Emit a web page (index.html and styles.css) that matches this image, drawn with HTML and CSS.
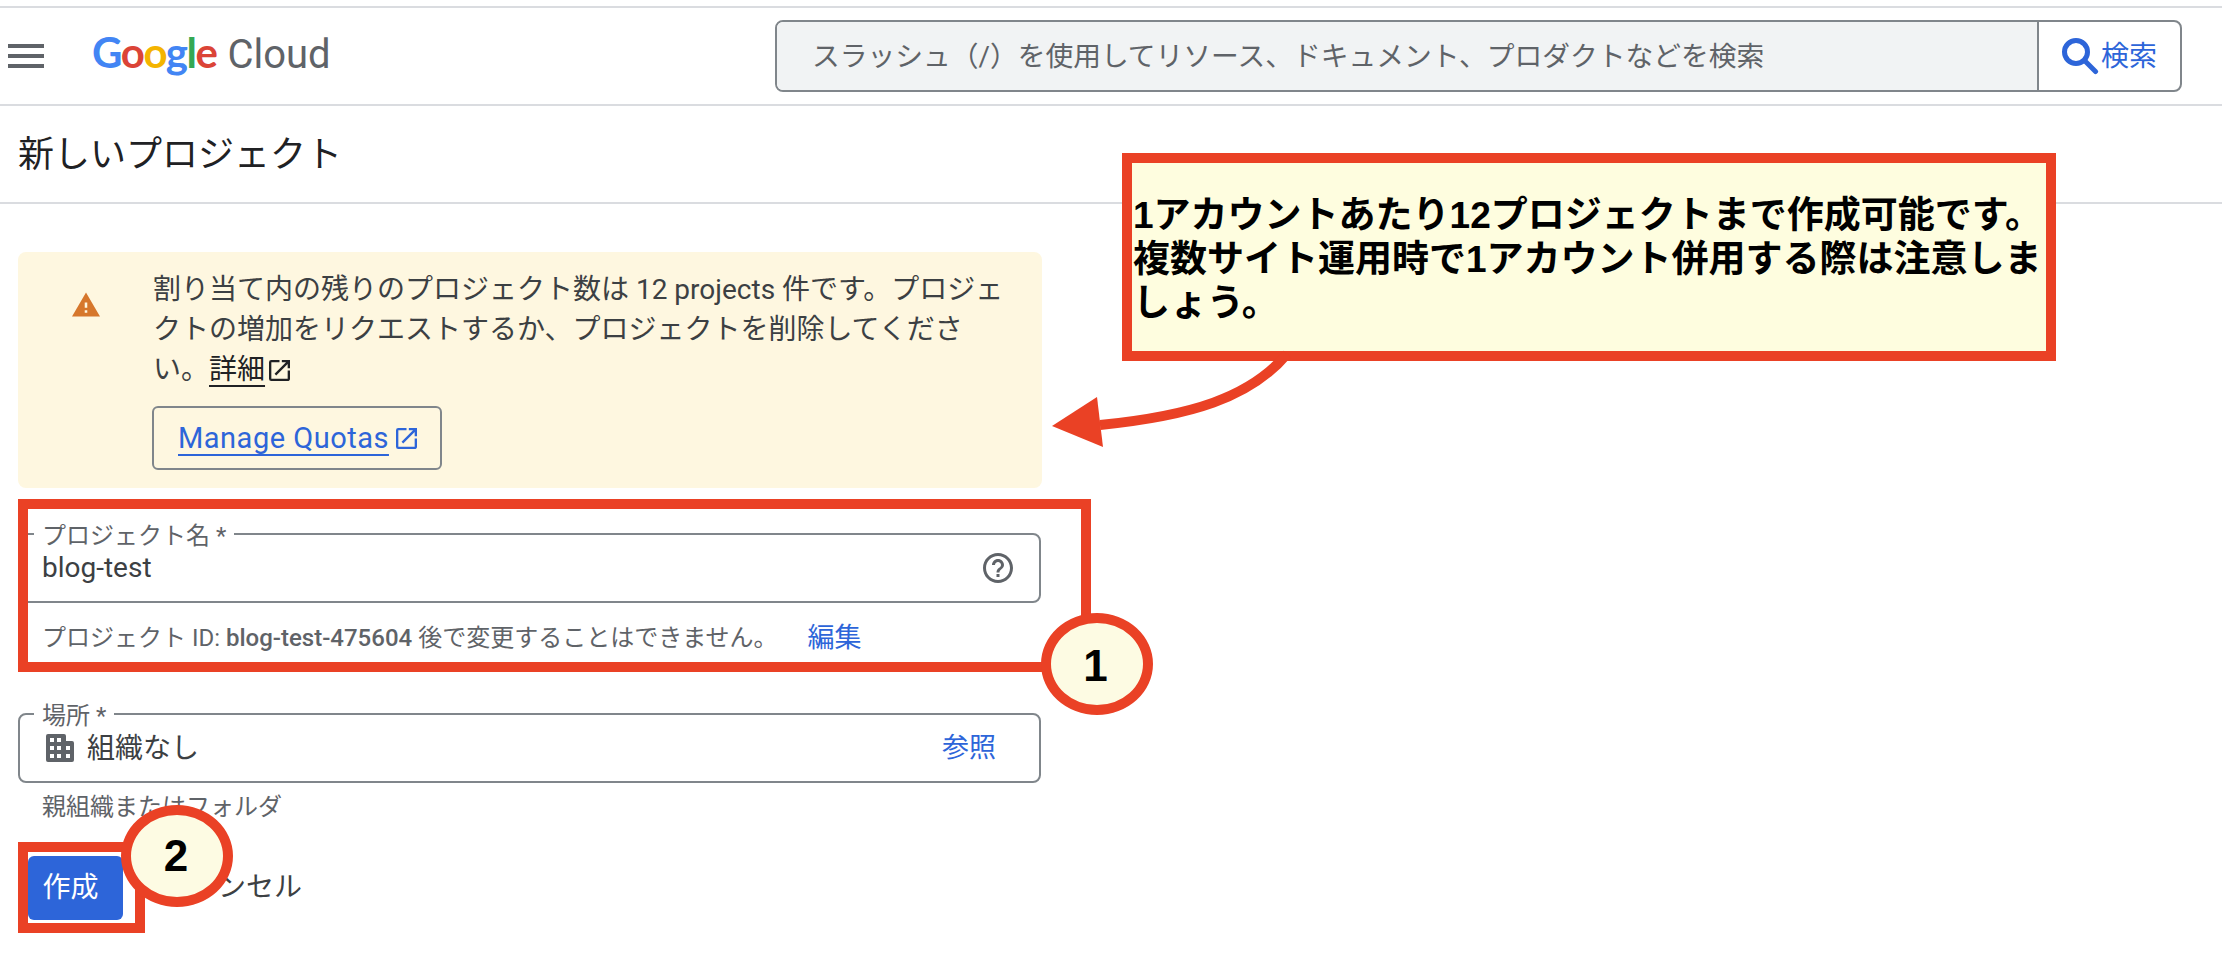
FILE: index.html
```html
<!DOCTYPE html>
<html lang="ja">
  <head>
    <meta charset="UTF-8" />
    <title>新しいプロジェクト</title>
    <link rel="stylesheet" href="styles.css">
  </head>

  <body>
    <header class="topbar">
      <div class="menu-btn"><span></span><span></span><span></span></div>
      <div class="logo">
        <span class="logo-google"><span class="c-blue">G</span><span class="c-red">o</span><span class="c-yellow">o</span><span class="c-blue">g</span><span class="c-green">l</span><span class="c-red">e</span></span>
        <span class="logo-cloud">Cloud</span>
      </div>
      <div class="search">
        <div class="search-input">スラッシュ（/）を使用してリソース、ドキュメント、プロダクトなどを検索</div>
        <div class="search-btn">
          <svg class="search-icon" viewBox="0 0 38 38"><circle cx="15" cy="15" r="11.5" fill="none" stroke="#2d65d9" stroke-width="5"/><path d="M23.5 23.5 34.5 34.5" stroke="#2d65d9" stroke-width="5" stroke-linecap="round"/></svg>
          <span>検索</span>
        </div>
      </div>
    </header>

    <div class="title-bar">
      <h1>新しいプロジェクト</h1>
    </div>

    <main class="form">
      <div class="notice">
        <svg class="warn-icon" viewBox="1 2 22 19"><path d="M1 21h22L12 2 1 21zm12-3h-2v-2h2v2zm0-4h-2v-4h2v4z"/></svg>
        <div class="notice-body">
          <p class="notice-text">割り当て内の残りのプロジェクト数は 12 projects 件です。プロジェクトの増加をリクエストするか、プロジェクトを削除してください。<a class="learn-link">詳細</a>
            <svg class="ext-icon" viewBox="3 3 18 18"><path d="M19 19H5V5h7V3H5a2 2 0 0 0-2 2v14a2 2 0 0 0 2 2h14c1.1 0 2-.9 2-2v-7h-2v7zM14 3v2h3.59l-9.83 9.83 1.41 1.41L19 6.41V10h2V3h-7z"/></svg>
          </p>
          <div class="quota-btn">
            <a>Manage Quotas</a>
            <svg class="ext-icon blue" viewBox="3 3 18 18"><path d="M19 19H5V5h7V3H5a2 2 0 0 0-2 2v14a2 2 0 0 0 2 2h14c1.1 0 2-.9 2-2v-7h-2v7zM14 3v2h3.59l-9.83 9.83 1.41 1.41L19 6.41V10h2V3h-7z"/></svg>
          </div>
        </div>
      </div>

      <div class="field field-name">
        <label class="field-label">プロジェクト名 *</label>
        <span class="field-value">blog-test</span>
        <svg class="help-icon" viewBox="2 2 20 20"><path d="M11 18h2v-2h-2v2zm1-16C6.48 2 2 6.48 2 12s4.48 10 10 10 10-4.48 10-10S17.52 2 12 2zm0 18c-4.41 0-8-3.59-8-8s3.59-8 8-8 8 3.59 8 8-3.59 8-8 8zm0-14c-2.21 0-4 1.79-4 4h2c0-1.1.9-2 2-2s2 .9 2 2c0 2-3 1.75-3 5h2c0-2.25 3-2.5 3-5 0-2.21-1.79-4-4-4z"/></svg>
      </div>
      <div class="hint hint-id">
        <span>プロジェクト ID: <b>blog-test-475604</b> 後で変更することはできません。</span>
        <a class="edit-link">編集</a>
      </div>

      <div class="field field-place">
        <label class="field-label">場所 *</label>
        <svg class="org-icon" viewBox="0 0 28 28"><path fill-rule="evenodd" d="M2 0H18a2 2 0 0 1 2 2V7H26a2 2 0 0 1 2 2V26a2 2 0 0 1-2 2H2a2 2 0 0 1-2-2V2a2 2 0 0 1 2-2ZM4 4V8H8V4ZM11 4V8H15V4ZM4 12V16H8V12ZM11 12V16H15V12ZM20 12V16H24V12ZM4 20V24H8V20ZM11 20V24H15V20ZM20 20V24H24V20Z"/></svg>
        <span class="field-value">組織なし</span>
        <a class="browse-link">参照</a>
      </div>
      <div class="hint hint-place">親組織またはフォルダ</div>

      <div class="actions">
        <div class="btn-create">作成</div>
        <div class="btn-cancel">キャンセル</div>
      </div>
    </main>

    <!-- red notes drawn over the screenshot -->
    <div class="callout">1アカウントあたり12プロジェクトまで作成可能です。複数サイト運用時で1アカウント併用する際は注意しましょう。</div>
    <svg class="arrow" viewBox="0 0 260 100">
      <path d="M237 4C200 48 140 66 50 75" fill="none" stroke="#ea4125" stroke-width="10"/>
      <path d="M2 76 47 47 53 97Z" fill="#ea4125"/>
    </svg>
    <div class="mark mark-name"></div>
    <div class="badge badge-one">1</div>
    <div class="mark mark-create"></div>
    <div class="badge badge-two">2</div>
  </body>
</html>
```

FILE: styles.css
```css
* {
  box-sizing: border-box;
}

body {
  margin: 0;
  position: relative;
  width: 2222px;
  height: 960px;
  overflow: hidden;
  background: #fff;
  color: #202124;
  font-family: Roboto, "Noto Sans CJK JP", sans-serif;
}

a {
  color: #2d65d9;
}

/* top bar */
.topbar {
  margin-top: 6px;
  height: 100px;
  border-top: 2px solid #dadce0;
  border-bottom: 2px solid #dadce0;
  display: flex;
  align-items: center;
  padding: 0 40px 0 8px;
}

.menu-btn {
  display: flex;
  flex-direction: column;
  gap: 6px;
  width: 36px;
}

.menu-btn span {
  height: 4px;
  background: #5f6368;
}

.logo {
  margin-left: 48px;
  margin-bottom: 5px;
  display: flex;
  align-items: baseline;
  gap: 11px;
  font-size: 42px;
  line-height: 50px;
}

.logo-google {
  font-family: Lato, sans-serif;
  font-weight: 700;
  letter-spacing: -1.5px;
}

.logo-cloud {
  font-family: Roboto, sans-serif;
  font-size: 40px;
  color: #5f6368;
}

.c-blue { color: #4285f4; }
.c-red { color: #db4437; }
.c-yellow { color: #f4b400; }
.c-green { color: #34a853; }

.search {
  margin-left: auto;
  width: 1407px;
  height: 72px;
  display: flex;
  border: 2px solid #80868b;
  border-radius: 8px;
  overflow: hidden;
}

.search-input {
  flex: 1;
  display: flex;
  align-items: center;
  padding: 0 0 5px 35px;
  background: #f1f3f4;
  color: #5f6368;
  font-size: 27.75px;
}

.search-btn {
  width: 143px;
  border-left: 2px solid #80868b;
  display: flex;
  align-items: center;
  padding-left: 22px;
  gap: 2px;
  color: #2d65d9;
  font-size: 28px;
}

.search-btn span {
  margin-bottom: 5px;
}

.search-icon {
  width: 38px;
  height: 38px;
}

/* page title */
.title-bar {
  height: 98px;
  border-bottom: 2px solid #dadce0;
  display: flex;
  align-items: center;
  padding: 0 0 7px 18px;
}

h1 {
  margin: 0;
  font-size: 36px;
  font-weight: 400;
}

/* form */
.form {
  margin-left: 18px;
  width: 1024px;
}

.notice {
  margin-top: 48px;
  height: 236px;
  display: flex;
  padding: 18px 0 18px 54px;
  background: #fef7e0;
  border-radius: 8px;
}

.warn-icon {
  width: 28px;
  height: 25px;
  margin-top: 22px;
  fill: #d6772c;
  flex: none;
}

.notice-body {
  margin-left: 53px;
  width: 856px;
}

.notice-text {
  margin: 0;
  font-size: 28px;
  line-height: 40px;
  color: #3c4043;
}

.learn-link {
  color: #202124;
  text-decoration: underline;
  text-decoration-thickness: 2px;
  text-underline-offset: 6px;
  text-decoration-skip-ink: none;
}

.ext-icon {
  width: 21px;
  height: 21px;
  margin-left: -3px;
  fill: #202124;
  vertical-align: -2px;
}

.ext-icon.blue {
  fill: #2d65d9;
  margin-left: 0;
  vertical-align: 0;
}

.quota-btn {
  margin: 16px 0 0 -1px;
  width: 290px;
  height: 64px;
  display: flex;
  align-items: center;
  gap: 7px;
  padding-left: 24px;
  border: 2px solid #80868b;
  border-radius: 6px;
  font-size: 29px;
  letter-spacing: 0.5px;
}

.quota-btn a {
  text-decoration: underline;
  text-decoration-thickness: 2px;
  text-underline-offset: 6px;
  text-decoration-skip-ink: none;
}

.field {
  position: relative;
  width: 1023px;
  height: 70px;
  display: flex;
  align-items: center;
  border: 2px solid #80868b;
  border-radius: 8px;
  font-size: 28px;
  color: #3c4043;
}

.field-name {
  margin-top: 45px;
  padding: 0 26px 0 22px;
}

.field-name .field-value {
  margin-bottom: 2px;
}

.field-place {
  margin-top: 55px;
  padding: 0 43px 0 26px;
}

.field-place .field-value,
.browse-link {
  margin-bottom: 5px;
}

.field-label {
  position: absolute;
  left: 14px;
  top: -14px;
  padding: 0 8px;
  background: #fff;
  color: #5f6368;
  font-size: 24px;
  line-height: 30px;
}

.help-icon {
  margin-left: auto;
  width: 30px;
  height: 30px;
  fill: #5f6368;
}

.org-icon {
  width: 28px;
  height: 28px;
  margin-right: 13px;
  fill: #5f6368;
}

.browse-link {
  margin-left: auto;
  font-size: 27px;
}

.hint {
  padding-left: 24px;
  color: #5f6368;
  font-size: 24px;
}

.hint b {
  font-weight: 500;
}

.hint-id {
  margin-top: 15px;
  height: 40px;
  display: flex;
  align-items: center;
  padding-bottom: 5px;
}

.edit-link {
  margin-left: 30px;
  font-size: 27px;
}

.hint-place {
  margin-top: 9px;
  line-height: 30px;
}

.actions {
  margin-top: 34px;
  margin-left: 10px;
  display: flex;
  align-items: center;
  font-size: 28px;
}

.btn-create {
  width: 95px;
  height: 64px;
  display: flex;
  align-items: center;
  justify-content: center;
  padding: 0 10px 6px 0;
  background: #2d65d9;
  border-radius: 6px;
  color: #fff;
}

.btn-cancel {
  margin: 0 0 6px 39px;
  color: #3c4043;
}

/* annotations */
.callout {
  position: absolute;
  left: 1122px;
  top: 153px;
  width: 934px;
  height: 208px;
  display: flex;
  align-items: center;
  padding: 5px 0 0 1px;
  background: #fefddf;
  border: 10px solid #ea4125;
  color: #000;
  font-family: "Liberation Sans", "Noto Sans CJK JP", sans-serif;
  font-size: 37px;
  font-weight: 700;
  line-height: 44px;
}

.arrow {
  position: absolute;
  left: 1050px;
  top: 350px;
  width: 260px;
  height: 100px;
}

.mark {
  position: absolute;
  border: 10px solid #ea4125;
}

.mark-name {
  left: 18px;
  top: 499px;
  width: 1073px;
  height: 173px;
}

.mark-create {
  left: 18px;
  top: 842px;
  width: 127px;
  height: 91px;
}

.badge {
  position: absolute;
  width: 112px;
  height: 102px;
  display: flex;
  align-items: center;
  justify-content: center;
  background: #fdfbe3;
  border: 10px solid #ea4125;
  border-radius: 50%;
  color: #000;
  font-family: "Liberation Sans", sans-serif;
  font-size: 44px;
  font-weight: 700;
}

.badge-one {
  left: 1041px;
  top: 613px;
  padding: 4px 3px 0 0;
}

.badge-two {
  left: 121px;
  top: 805px;
  padding-right: 2px;
}
```
